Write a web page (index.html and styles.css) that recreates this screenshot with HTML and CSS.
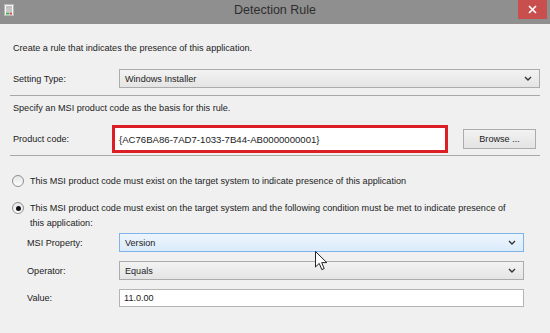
FILE: index.html
```html
<!DOCTYPE html>
<html lang="en">
<head>
  <meta charset="UTF-8">
  <title>Detection Rule</title>
  <link rel="stylesheet" href="styles.css">
</head>
<body>
  <div class="window">
    <div class="titlebar">
      <svg class="app-icon" width="10" height="12" viewBox="0 0 10 12">
        <rect x="0.5" y="0.5" width="9" height="11" fill="#f4f4f4" stroke="#b8b8b8"/>
        <rect x="2" y="2.5" width="6" height="1" fill="#8a8a8a"/>
        <rect x="2" y="4.5" width="6" height="1" fill="#9a9a9a"/>
        <rect x="2" y="6.5" width="6" height="1" fill="#9a9a9a"/>
        <rect x="2" y="8.5" width="3" height="2" fill="#3fae5a"/>
        <rect x="5.5" y="8.5" width="2.5" height="2" fill="#d04848"/>
      </svg>
      <div class="title">Detection Rule</div>
      <div class="close">
        <svg width="9" height="9" viewBox="0 0 9 9"><path d="M1 1L8 8M8 1L1 8" stroke="#fff" stroke-width="1.6"/></svg>
      </div>
    </div>

    <div class="content">
      <p class="intro">Create a rule that indicates the presence of this application.</p>

      <div class="row setting-row">
        <span class="lbl">Setting Type:</span>
        <div class="select">
          <span>Windows Installer</span>
          <svg class="chev" width="8" height="5" viewBox="0 0 8 5"><path d="M1 1L4 4L7 1" fill="none" stroke="#333" stroke-width="1.4"/></svg>
        </div>
      </div>

      <div class="sep"></div>

      <p class="hint">Specify an MSI product code as the basis for this rule.</p>

      <div class="row code-row">
        <span class="lbl lbl-code">Product code:</span>
        <div class="code-box">{AC76BA86-7AD7-1033-7B44-AB0000000001}</div>
        <button class="browse">Browse ...</button>
      </div>

      <div class="sep sep-2"></div>

      <div class="radio-row first">
        <span class="radio"></span>
        <span class="radio-text">This MSI product code must exist on the target system to indicate presence of this application</span>
      </div>
      <div class="radio-row second">
        <span class="radio checked"></span>
        <span class="radio-text">This MSI product code must exist on the target system and the following condition must be met to indicate presence of this application:</span>
      </div>

      <div class="condition">
        <div class="row cond-row">
          <span class="lbl">MSI Property:</span>
          <div class="select hover">
            <span>Version</span>
            <svg class="chev" width="8" height="5" viewBox="0 0 8 5"><path d="M1 1L4 4L7 1" fill="none" stroke="#333" stroke-width="1.4"/></svg>
          </div>
        </div>
        <div class="row cond-row">
          <span class="lbl">Operator:</span>
          <div class="select">
            <span>Equals</span>
            <svg class="chev" width="8" height="5" viewBox="0 0 8 5"><path d="M1 1L4 4L7 1" fill="none" stroke="#333" stroke-width="1.4"/></svg>
          </div>
        </div>
        <div class="row cond-row">
          <span class="lbl">Value:</span>
          <div class="textbox">11.0.00</div>
        </div>
      </div>
    </div>

    <svg class="cursor" width="13" height="20" viewBox="0 0 13 20">
      <path d="M0.5 0.5L0.5 16L4.2 12.4L6.8 18.6L9.2 17.6L6.7 11.6L11.8 11.6Z" fill="#fff" stroke="#222" stroke-width="1" stroke-linejoin="round"/>
    </svg>
  </div>
</body>
</html>
```

FILE: styles.css
```css
:root { --text:#222; --line:#a8a8a8; }
html,body{margin:0;padding:0;}
body{width:550px;height:333px;overflow:hidden;background:#f0f0f0;font-family:"Liberation Sans",Arial,sans-serif;font-size:9.1px;color:var(--text);}

.window{position:relative;height:333px;background:#f0f0f0;}

.titlebar{height:24px;background:#8f8f8f;display:flex;align-items:flex-start;position:relative;}
.app-icon{margin:4px 0 0 4px;}
.title{position:absolute;left:0;right:0;top:3px;text-align:center;font-size:12.5px;color:#2e2e2e;}
.close{margin-left:auto;margin-right:3px;width:29px;height:19px;background:#c94e4e;display:flex;align-items:center;justify-content:center;position:relative;}

.content{padding:17px 10px 0 13px;}
p{margin:0;line-height:14px;}

.row{display:flex;align-items:center;}
.lbl{flex:none;width:106px;}
.setting-row{margin-top:14px;}

.select{flex:1;height:17px;border:1px solid #acacac;background:linear-gradient(#f3f3f3,#e4e4e4);display:flex;align-items:center;padding:0 7px 0 5px;}
.select span{flex:1;}
.select.hover{border-color:#7eb4ea;background:linear-gradient(#edf5fd,#dbebfb);}
.chev{flex:none;}

.sep{height:1px;background:var(--line);margin:7px 0 0 -3px;}

.hint{margin-top:5px;}

.code-row{margin-top:10px;height:28px;}
.lbl-code{width:99px;}
.code-box{width:326px;height:22px;border:3px solid #dc1f26;background:#fff;display:flex;align-items:center;padding-left:4px;font-size:9.6px;}
.browse{margin:0 2px 0 15px;width:73px;height:20px;border:1px solid #acacac;background:linear-gradient(#f2f2f2,#e3e3e3);font-family:inherit;font-size:9.1px;color:var(--text);padding:0;}

.sep-2{margin-top:2px;}

.radio-row{display:flex;align-items:flex-start;line-height:15px;}
.radio-row.first{margin-top:18px;}
.radio-row.second{margin-top:12px;}
.radio-text{max-width:482px;}
.radio{flex:none;width:10px;height:10px;border:1px solid #8e8f8f;border-radius:50%;background:linear-gradient(#e6e6e6,#fcfcfc);margin:1px 6px 0 -1px;display:flex;align-items:center;justify-content:center;}
.radio.checked::after{content:"";width:5px;height:5px;border-radius:50%;background:#111;}

.condition{padding:0 16px 0 14px;margin-top:2px;}
.condition .lbl{width:92px;}
.cond-row{margin-bottom:9px;}
.cond-row .select{height:17px;}
.textbox{flex:1;height:16px;border:1px solid #b4b4b4;background:#fff;display:flex;align-items:center;padding-left:4px;}

.cursor{position:absolute;left:315px;top:251px;}
```
